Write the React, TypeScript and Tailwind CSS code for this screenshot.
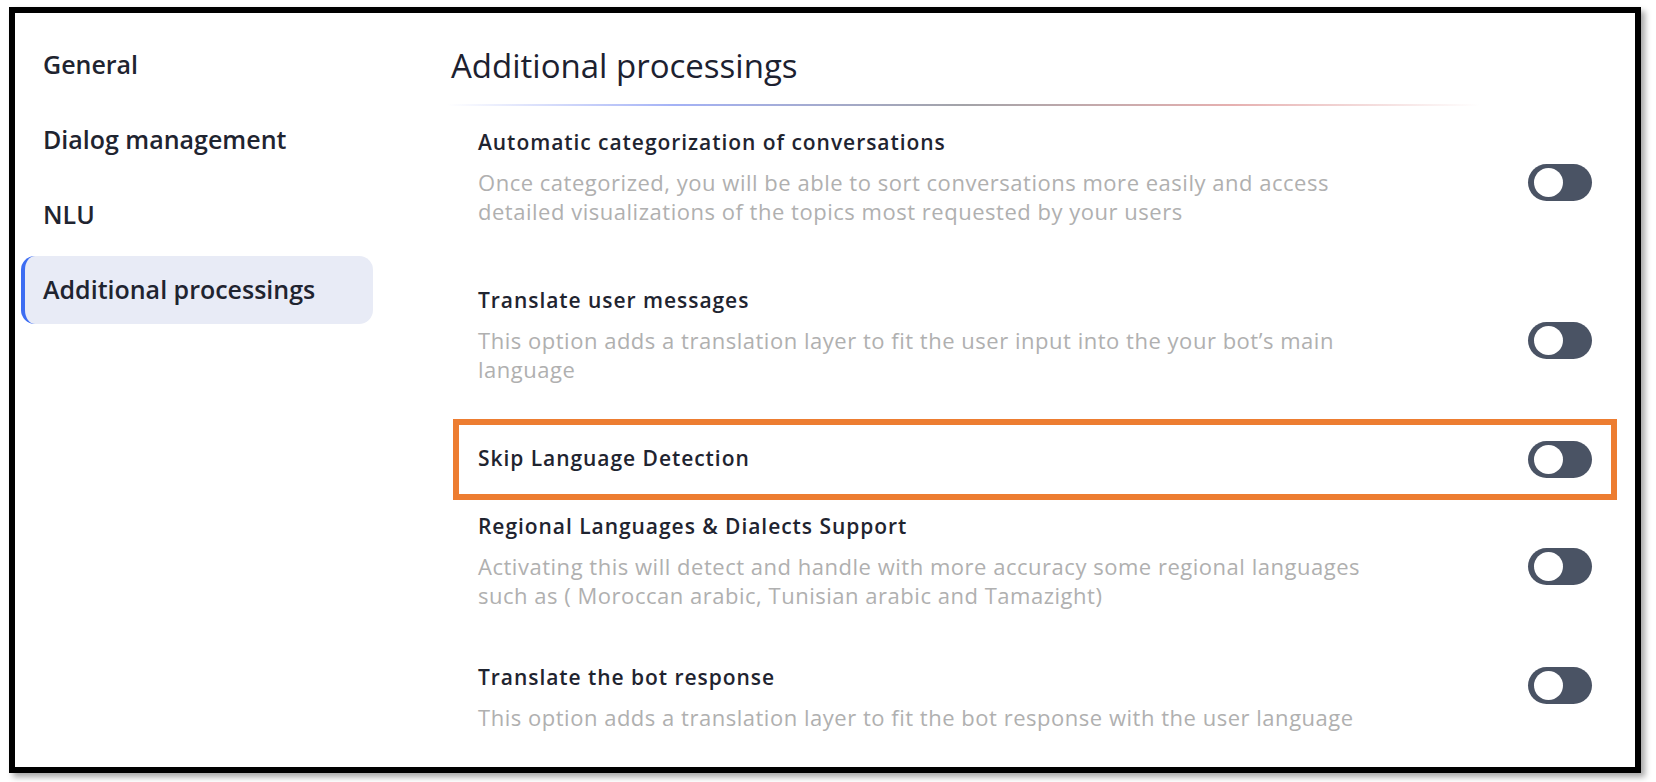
import React from "react";

function Toggle({ className = "" }: { className?: string }) {
  return (
    <div className={"w-[64px] h-[37px] rounded-full bg-[#4a5364] flex items-center shrink-0 " + className}>
      <div className="w-[29px] h-[29px] rounded-full bg-white ml-[6px]" />
    </div>
  );
}

const navItems = ["General", "Dialog management", "NLU", "Additional processings"];

const titleCls = "text-[21px] leading-[28px] font-semibold tracking-[0.95px] text-[#1f2430]";
const descCls = "mt-[12px] text-[22px] leading-[29px] tracking-[0.52px] text-[#b0b0b0]";

export default function App() {
  return (
    <div className="w-[1656px] h-[782px] bg-white pt-[7px] pl-[9px] font-['Open_Sans',sans-serif]">
      <div className="w-[1632px] h-[766px] border-[6px] border-black bg-white shadow-[4px_4px_6px_rgba(0,0,0,0.35)] flex">
        <aside className="w-[438px] shrink-0 pt-[18px] pl-[6px] flex flex-col gap-[7px]">
          {navItems.map((item, i) =>
            i === 3 ? (
              <div
                key={item}
                className="h-[68px] w-[352px] flex items-center pl-[18px] rounded-[14px] bg-[#e8ebf6] border-l-4 border-[#3d6df2] text-[25px] font-semibold text-[#1f2430]"
              >
                {item}
              </div>
            ) : (
              <div
                key={item}
                className="h-[68px] w-[352px] flex items-center pl-[22px] text-[25px] font-semibold text-[#1f2430]"
              >
                {item}
              </div>
            )
          )}
        </aside>
        <main className="flex-1 pr-[18px] pt-[33px]">
          <h1 className="text-[33px] leading-[40px] ml-[-2px] text-[#1c2130] font-medium">Additional processings</h1>
          <div className="mt-[18px] h-[2px] ml-[-6px] w-[1033px] bg-[linear-gradient(90deg,rgba(170,182,244,0)_0%,#a4b2f6_22%,#a3a3a8_50%,#e6b0b0_76%,rgba(250,220,220,0)_100%)]" />

          <div className="mt-[22px] flex justify-between items-start px-[25px]">
            <div>
              <div className={titleCls}>Automatic categorization of conversations</div>
              <div className={descCls}>
                <div>Once categorized, you will be able to sort conversations more easily and access</div>
                <div>detailed visualizations of the topics most requested by your users</div>
              </div>
            </div>
            <Toggle className="mt-[36px]" />
          </div>

          <div className="mt-[60px] flex justify-between items-start px-[25px]">
            <div>
              <div className={titleCls}>Translate user messages</div>
              <div className={descCls}>
                <div>This option adds a translation layer to fit the user input into the your bot’s main</div>
                <div>language</div>
              </div>
            </div>
            <Toggle className="mt-[36px]" />
          </div>

          <div className="mt-[35px] h-[81px] border-[6px] border-[#ed7d31] flex justify-between items-center px-[19px]">
            <div className={titleCls + " mt-[-3px]"}>Skip Language Detection</div>
            <Toggle />
          </div>

          <div className="mt-[12px] flex justify-between items-start px-[25px]">
            <div>
              <div className={titleCls}>Regional Languages &amp; Dialects Support</div>
              <div className={descCls}>
                <div>Activating this will detect and handle with more accuracy some regional languages</div>
                <div>such as ( Moroccan arabic, Tunisian arabic and Tamazight)</div>
              </div>
            </div>
            <Toggle className="mt-[36px]" />
          </div>

          <div className="mt-[53px] flex justify-between items-start px-[25px]">
            <div>
              <div className={titleCls}>Translate the bot response</div>
              <div className={descCls}>
                <div>This option adds a translation layer to fit the bot response with the user language</div>
              </div>
            </div>
            <Toggle className="mt-[4px]" />
          </div>
        </main>
      </div>
    </div>
  );
}
